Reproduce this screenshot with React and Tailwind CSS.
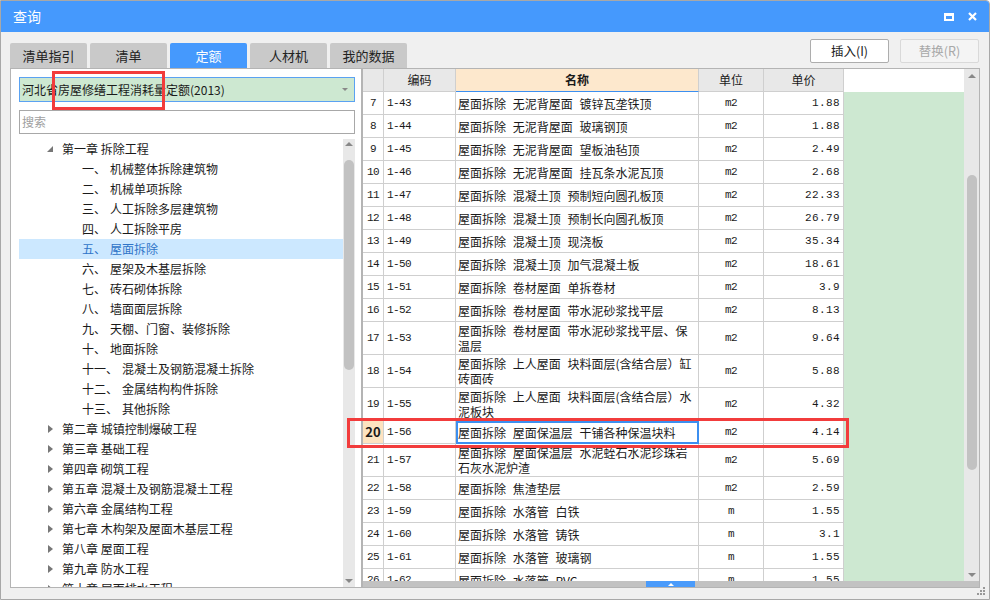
import React from 'react';

const FONT = { fontFamily: '"Noto Sans CJK SC", "Microsoft YaHei", sans-serif' };
const MONO = { fontFamily: '"Liberation Mono", "Noto Sans CJK SC", monospace', fontSize: 11, letterSpacing: "-0.6px" };

const tabs = ["清单指引", "清单", "定额", "人材机", "我的数据"];

const tree = [
  { t: "第一章 拆除工程", chap: true, open: true },
  { n: "一、", t: "机械整体拆除建筑物" },
  { n: "二、", t: "机械单项拆除" },
  { n: "三、", t: "人工拆除多层建筑物" },
  { n: "四、", t: "人工拆除平房" },
  { n: "五、", t: "屋面拆除", sel: true },
  { n: "六、", t: "屋架及木基层拆除" },
  { n: "七、", t: "砖石砌体拆除" },
  { n: "八、", t: "墙面面层拆除" },
  { n: "九、", t: "天棚、门窗、装修拆除" },
  { n: "十、", t: "地面拆除" },
  { n: "十一、", t: "混凝土及钢筋混凝土拆除" },
  { n: "十二、", t: "金属结构构件拆除" },
  { n: "十三、", t: "其他拆除" },
  { t: "第二章 城镇控制爆破工程", chap: true },
  { t: "第三章 基础工程", chap: true },
  { t: "第四章 砌筑工程", chap: true },
  { t: "第五章 混凝土及钢筋混凝土工程", chap: true },
  { t: "第六章 金属结构工程", chap: true },
  { t: "第七章 木构架及屋面木基层工程", chap: true },
  { t: "第八章 屋面工程", chap: true },
  { t: "第九章 防水工程", chap: true },
  { t: "第十章 屋面排水工程", chap: true },
];

const rows = [
  ["7", "1-43", ["屋面拆除 无泥背屋面 镀锌瓦垄铁顶"], "m2", "1.88"],
  ["8", "1-44", ["屋面拆除 无泥背屋面 玻璃钢顶"], "m2", "1.88"],
  ["9", "1-45", ["屋面拆除 无泥背屋面 望板油毡顶"], "m2", "2.49"],
  ["10", "1-46", ["屋面拆除 无泥背屋面 挂瓦条水泥瓦顶"], "m2", "2.68"],
  ["11", "1-47", ["屋面拆除 混凝土顶 预制短向圆孔板顶"], "m2", "22.33"],
  ["12", "1-48", ["屋面拆除 混凝土顶 预制长向圆孔板顶"], "m2", "26.79"],
  ["13", "1-49", ["屋面拆除 混凝土顶 现浇板"], "m2", "35.34"],
  ["14", "1-50", ["屋面拆除 混凝土顶 加气混凝土板"], "m2", "18.61"],
  ["15", "1-51", ["屋面拆除 卷材屋面 单拆卷材"], "m2", "3.9"],
  ["16", "1-52", ["屋面拆除 卷材屋面 带水泥砂浆找平层"], "m2", "8.13"],
  ["17", "1-53", ["屋面拆除 卷材屋面 带水泥砂浆找平层、保", "温层"], "m2", "9.64"],
  ["18", "1-54", ["屋面拆除 上人屋面 块料面层(含结合层）缸", "砖面砖"], "m2", "5.88"],
  ["19", "1-55", ["屋面拆除 上人屋面 块料面层(含结合层）水", "泥板块"], "m2", "4.32"],
  ["20", "1-56", ["屋面拆除 屋面保温层 干铺各种保温块料"], "m2", "4.14", true],
  ["21", "1-57", ["屋面拆除 屋面保温层 水泥蛭石水泥珍珠岩", "石灰水泥炉渣"], "m2", "5.69"],
  ["22", "1-58", ["屋面拆除 焦渣垫层"], "m2", "2.59"],
  ["23", "1-59", ["屋面拆除 水落管 白铁"], "m", "1.55"],
  ["24", "1-60", ["屋面拆除 水落管 铸铁"], "m", "3.1"],
  ["25", "1-61", ["屋面拆除 水落管 玻璃钢"], "m", "1.55"],
  ["26", "1-62", ["屋面拆除 水落管 PVC"], "m", "1.55"],
];

const Up = () => <div className="w-0 h-0 border-l-[4px] border-r-[4px] border-b-[4px] border-l-transparent border-r-transparent border-b-[#888]" />;
const Down = () => <div className="w-0 h-0 border-l-[4px] border-r-[4px] border-t-[4px] border-l-transparent border-r-transparent border-t-[#888]" />;

function TreePanel() {
  return (
    <div className="w-[352px] flex flex-col bg-white border border-[#b4b4b4] pl-[8px] pr-[6px] pt-[8px] overflow-hidden">
      <div className="h-[25px] shrink-0 flex items-center justify-between bg-[#cde8d1] border border-[#5aa2f2] pl-[2px] pr-[6px] text-[12px] text-[#1a1a1a]">
        <span>河北省房屋修缮工程消耗量定额(2013)</span>
        <div className="w-0 h-0 border-l-[3px] border-r-[3px] border-t-[3px] border-l-transparent border-r-transparent border-t-[#888]" />
      </div>
      <div className="mt-[8px] h-[24px] shrink-0 flex items-center border border-[#a8a8a8] px-[2px] text-[12px] text-[#a0a0a0]">搜索</div>
      <div className="mt-[5px] flex flex-1 min-h-0 overflow-hidden">
        <div className="flex-1 min-w-0 overflow-hidden text-[12px] text-[#1a1a1a]">
          {tree.map((it, i) => (
            <div key={i} className={`h-[20px] flex items-center whitespace-nowrap ${it.sel ? "bg-[#cce8ff] text-[#2f74c8]" : ""}`}>
              {it.chap ? (
                <>
                  <div className="w-[43px] flex justify-end pr-[9px]">
                    {it.open ? (
                      <svg width="6" height="6" viewBox="0 0 6 6"><path d="M6 0V6H0Z" fill="#777" /></svg>
                    ) : (
                      <svg width="5" height="8" viewBox="0 0 5 8"><path d="M0 0L5 4L0 8Z" fill="#777" /></svg>
                    )}
                  </div>
                  <span>{it.t}</span>
                </>
              ) : (
                <span className="ml-[63px]">{it.n}<span className="ml-[4px]">{it.t}</span></span>
              )}
            </div>
          ))}
        </div>
        <div className="w-[12px] bg-[#e8e8e8] flex flex-col items-center pt-[3px]">
          <Up />
          <div className="mt-[14px] w-[10px] h-[210px] rounded-[5px] bg-[#c2c2c2]" />
          <div className="flex-1" />
          <div className="pb-[4px]"><Down /></div>
        </div>
      </div>
    </div>
  );
}

const W = ["w-[21px]", "w-[72px]", "w-[243px]", "w-[65px]", "w-[80px]"];

function DataTable() {
  return (
    <div className="flex-1 flex flex-col border border-[#b4b4b4] bg-white text-[12px] text-[#1a1a1a] overflow-hidden">
      <div className="flex flex-1 min-h-0">
        <div className="flex-1 min-w-0 flex flex-col overflow-hidden">
          <div className="flex h-[23px] shrink-0">
            <div className={`${W[0]} bg-[#e8e8e8] border-r border-b border-[#cfcfcf]`} />
            <div className={`${W[1]} bg-[#e8e8e8] border-r border-b border-[#cfcfcf] flex items-center justify-center`}>编码</div>
            <div className={`${W[2]} bg-[#fde8cd] border-r border-[#cfcfcf] border-b border-b-[#3c8ff0] flex items-center justify-center font-bold`}>名称</div>
            <div className={`${W[3]} bg-[#e8e8e8] border-r border-b border-[#cfcfcf] flex items-center justify-center`}>单位</div>
            <div className={`${W[4]} bg-[#e8e8e8] border-r border-b border-[#cfcfcf] flex items-center justify-center`}>单价</div>
            <div className="flex-1 bg-white" />
          </div>
          <div className="flex-1 min-h-0 overflow-hidden flex">
            <div className="flex flex-col">
              {rows.map(([no, code, name, unit, price, sel]) => {
                const h = name.length > 1 ? "h-[33px]" : "h-[23px]";
                return (
                  <div key={no} className={`flex ${h} shrink-0`}>
                    <div className={`${W[0]} border-r border-b border-[#cfcfcf] flex items-center justify-center ${sel ? "bg-[#fde3c0] font-bold text-[13px]" : ""}`} style={sel ? FONT : MONO}>{no}</div>
                    <div className={`${W[1]} border-r border-b border-[#cfcfcf] flex items-center pl-[3px]`} style={MONO}>{code}</div>
                    <div className={`${W[2]} border-r border-b border-[#cfcfcf] flex flex-col justify-center pl-[2px] whitespace-nowrap overflow-hidden [word-spacing:4px] ${sel ? "outline-2 outline-[#3c8ff0] -outline-offset-2" : ""}`}>
                      {name.map((l, i) => <div key={i} className="h-[15px] leading-[15px]">{l}</div>)}
                    </div>
                    <div className={`${W[3]} border-r border-b border-[#cfcfcf] flex items-center justify-center`} style={MONO}>{unit}</div>
                    <div className={`${W[4]} border-r border-b border-[#cfcfcf] flex items-center justify-end pr-[3px]`} style={{ ...MONO, letterSpacing: "0.4px" }}>{price}</div>
                  </div>
                );
              })}
            </div>
            <div className="flex-1 bg-[#cde8d1]" />
          </div>
        </div>
        <div className="w-[15px] bg-[#e8e8e8] flex flex-col items-center pt-[5px]">
          <Up />
          <div className="mt-[97px] w-[10px] h-[295px] rounded-[5px] bg-[#c2c2c2]" />
          <div className="flex-1" />
          <div className="pb-[4px]"><Down /></div>
        </div>
      </div>
      <div className="h-[6px] shrink-0 bg-[#c2c2c2] flex">
        <div className="w-[283px]" />
        <div className="w-[49px] bg-[#4a9bfb] flex items-center justify-center">
          <div className="w-0 h-0 border-l-[3px] border-r-[3px] border-b-[3px] border-l-transparent border-r-transparent border-b-white" />
        </div>
      </div>
    </div>
  );
}

export default function App() {
  return (
    <div className="w-[990px] h-[600px] relative flex flex-col bg-[#f0f0f0] border border-[#a8a8a8] rounded-tr-[4px] overflow-hidden" style={FONT}>
      <div className="h-[31px] shrink-0 bg-[#4599fd] flex items-center justify-between pl-[12px] pr-[12px] text-white text-[14px]">
        <span>查询</span>
        <div className="flex items-center gap-[14px]">
          <div className="w-[10px] h-[8px] border-2 border-t-[3px] border-white" />
          <svg width="9" height="9" viewBox="0 0 9 9"><path d="M1 1L8 8M8 1L1 8" stroke="white" strokeWidth="2.2" /></svg>
        </div>
      </div>
      <div className="flex-1 min-h-0 flex flex-col px-[9px] pb-[11px]">
        <div className="h-[36px] shrink-0 flex items-end justify-between">
          <div className="flex gap-[3px] text-[13px]">
            {tabs.map((t) => (
              <div key={t} className={`w-[77px] h-[25px] flex items-center justify-center rounded-t-[2px] ${t === "定额" ? "bg-[#4599fd] text-white" : "bg-[#c9c9c9] text-[#222]"}`}>{t}</div>
            ))}
          </div>
          <div className="flex gap-[11px] self-start mt-[7px] mr-[1px] text-[12.5px]">
            <div className="w-[79px] h-[24px] flex items-center justify-center bg-white border border-[#adadad] rounded-[2px] text-[#222]">插入(I)</div>
            <div className="w-[79px] h-[24px] flex items-center justify-center bg-[#f4f4f4] border border-[#d9d9d9] rounded-[2px] text-[#a8a8a8]">替换(R)</div>
          </div>
        </div>
        <div className="flex-1 min-h-0 flex">
          <TreePanel />
          <DataTable />
        </div>
      </div>
      <div className="absolute left-[51px] top-[70px] w-[113px] h-[39px] border-[3px] border-[#f23c3c]" />
      <div className="absolute left-[346px] top-[417px] w-[502px] h-[30px] border-[3px] border-[#f23c3c]" />
      <svg className="absolute right-[3px] bottom-[3px]" width="10" height="10" viewBox="0 0 10 10" fill="#999">
        <rect x="7" y="1" width="2" height="2" /><rect x="4" y="4" width="2" height="2" /><rect x="7" y="4" width="2" height="2" />
        <rect x="1" y="7" width="2" height="2" /><rect x="4" y="7" width="2" height="2" /><rect x="7" y="7" width="2" height="2" />
      </svg>
    </div>
  );
}
